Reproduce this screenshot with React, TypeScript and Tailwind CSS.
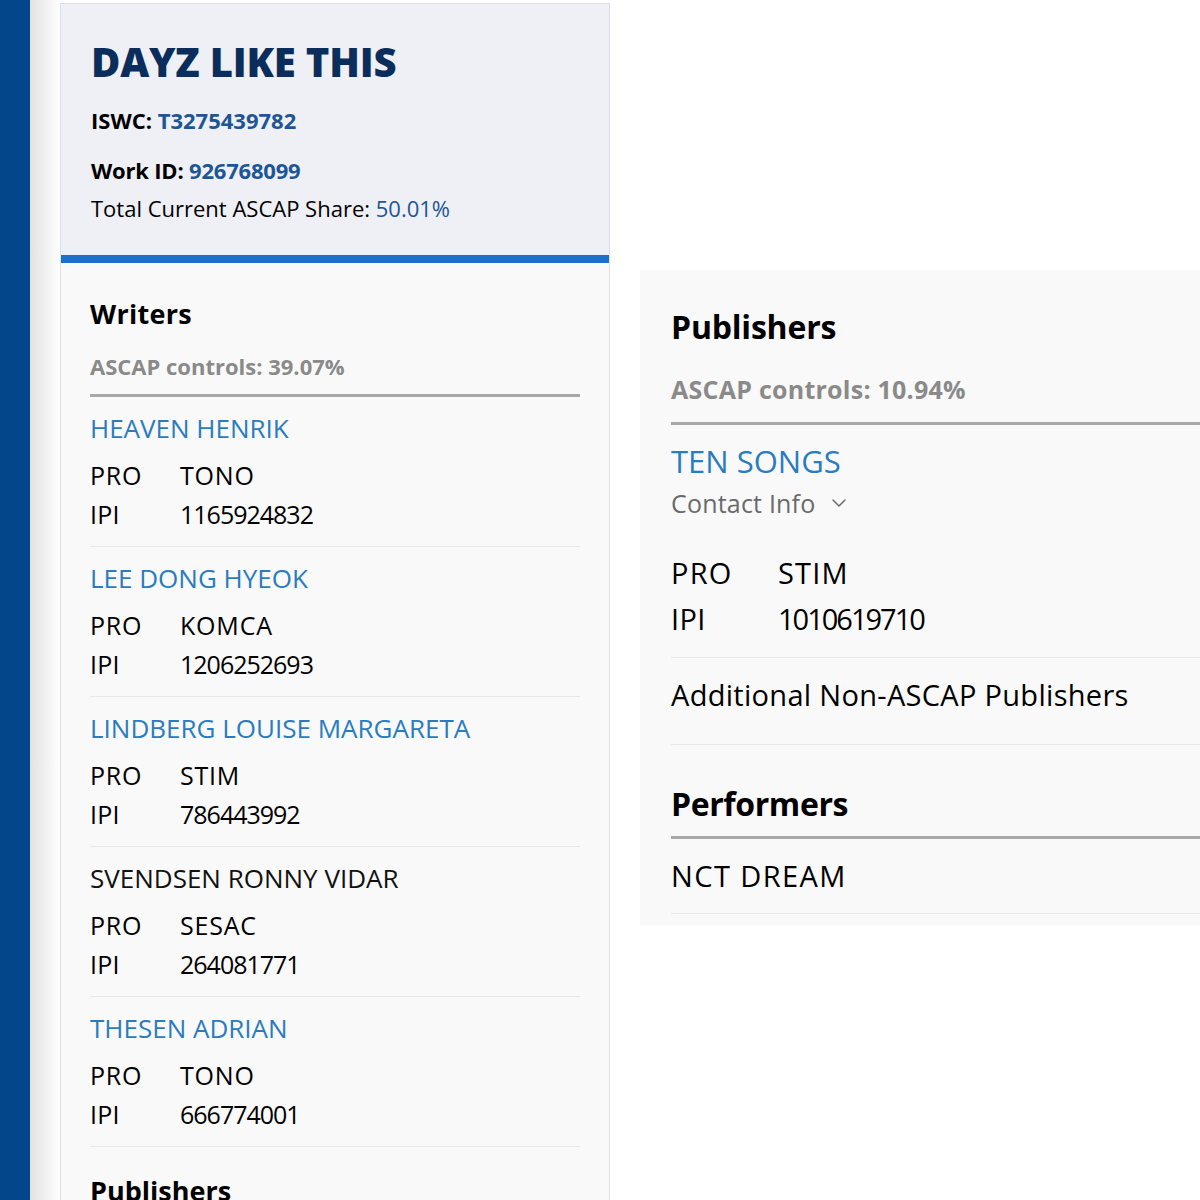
import React from "react";
import { ChevronDown } from "lucide-react";

const writers = [
  { name: "HEAVEN HENRIK", pro: "TONO", ipi: "1165924832", link: true },
  { name: "LEE DONG HYEOK", pro: "KOMCA", ipi: "1206252693", link: true },
  { name: "LINDBERG LOUISE MARGARETA", pro: "STIM", ipi: "786443992", link: true },
  { name: "SVENDSEN RONNY VIDAR", pro: "SESAC", ipi: "264081771", link: false },
  { name: "THESEN ADRIAN", pro: "TONO", ipi: "666774001", link: true },
];

export default function App() {
  return (
    <div
      className="flex w-[1200px] h-[1200px] overflow-hidden bg-white text-black"
      style={{ fontFamily: "'Open Sans', 'Noto Sans', sans-serif" }}
    >
      <div className="w-[30px] shrink-0 bg-[#03468a]" />
      <div className="w-[30px] shrink-0 bg-gradient-to-r from-[#e2e2e2] to-white" />

      {/* Left card */}
      <div className="w-[550px] shrink-0 mt-[3px] border border-[#dcdfe4] bg-[#f9f9f9] self-start">
        <div className="bg-[#eef0f5] px-[30px] pt-[34px] pb-[33px]">
          <h1 className="text-[40px] leading-[48px] font-extrabold text-[#0b2d5b] tracking-[-0.2px]">
            DAYZ LIKE THIS
          </h1>
          <p className="mt-[20px] text-[22px] leading-[28px] font-bold">
            ISWC: <span className="text-[#1d5694]">T3275439782</span>
          </p>
          <p className="mt-[22px] text-[22px] leading-[28px] font-bold tracking-[-0.2px]">
            Work ID: <span className="text-[#1d5694]">926768099</span>
          </p>
          <p className="mt-[10px] text-[22px] leading-[28px]">
            Total Current ASCAP Share: <span className="text-[#1d5694]">50.01%</span>
          </p>
        </div>
        <div className="h-[8px] bg-[#1a72c8]" />
        <div className="px-[29px] pt-[34px] pb-[20px]">
          <h2 className="text-[27px] leading-[34px] font-bold tracking-[0.3px]">Writers</h2>
          <p className="mt-[21px] text-[22px] leading-[28px] font-bold text-[#8a8a8a]">
            ASCAP controls: 39.07%
          </p>
          <div className="mt-[14px] h-[3px] bg-[#a8a8a8]" />
          {writers.map((w) => (
            <div key={w.name} className="pt-[15px] pb-[12px] border-b border-[#e8e8e8]">
              <div
                className={
                  "text-[26px] leading-[32px] " + (w.link ? "text-[#2a7cc0]" : "text-[#111]")
                }
              >
                {w.name}
              </div>
              <div className="mt-[12px] text-[25px] leading-[39px]">
                <div className="flex">
                  <span className="w-[90px] tracking-[0.8px]">PRO</span>
                  <span className="tracking-[0.8px]">{w.pro}</span>
                </div>
                <div className="flex">
                  <span className="w-[90px] tracking-[0.3px]">IPI</span>
                  <span className="tracking-[-1px]">{w.ipi}</span>
                </div>
              </div>
            </div>
          ))}
          <h2 className="mt-[27px] text-[27px] leading-[34px] font-bold">Publishers</h2>
        </div>
      </div>

      {/* Right panel */}
      <div className="ml-[30px] mt-[270px] w-[600px] shrink-0 self-start bg-[#f9f9f9] pl-[31px] pt-[37px] pb-[12px]">
        <h2 className="text-[32px] leading-[40px] font-bold tracking-[-0.2px]">Publishers</h2>
        <p className="mt-[26px] text-[25px] leading-[32px] font-bold text-[#8a8a8a] tracking-[0.25px]">
          ASCAP controls: 10.94%
        </p>
        <div className="mt-[17px] h-[3px] bg-[#a8a8a8]" />
        <div className="border-b border-[#e8e8e8] pb-[15px]">
          <div className="mt-[17px] text-[31px] leading-[38px] text-[#2a7cc0]">TEN SONGS</div>
          <div className="mt-[7px] flex items-center gap-[12px] text-[25px] leading-[32px] text-[#6a6a6a]">
            <span className="tracking-[0.2px]">Contact Info</span>
            <ChevronDown size={24} strokeWidth={1.5} />
          </div>
          <div className="mt-[31px] text-[29px] leading-[46px]">
            <div className="flex">
              <span className="w-[107px] tracking-[1.2px]">PRO</span>
              <span className="tracking-[1.2px]">STIM</span>
            </div>
            <div className="flex">
              <span className="w-[107px] tracking-[0.3px]">IPI</span>
              <span className="tracking-[-2px]">1010619710</span>
            </div>
          </div>
        </div>
        <div className="border-b border-[#e8e8e8] pt-[18px] pb-[30px] text-[29px] leading-[38px] tracking-[0.3px]">
          Additional Non-ASCAP Publishers
        </div>
        <h2 className="mt-[39px] text-[32px] leading-[40px] font-bold tracking-[-0.4px]">Performers</h2>
        <div className="mt-[12px] h-[3px] bg-[#a8a8a8]" />
        <div className="border-b border-[#e8e8e8] pt-[18px] pb-[18px] text-[29px] leading-[38px] tracking-[1.4px]">
          NCT DREAM
        </div>
      </div>
    </div>
  );
}
